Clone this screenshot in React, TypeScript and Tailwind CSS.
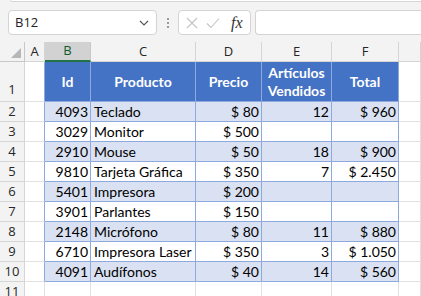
import React from "react";

type Row = [string, string, string, string, string];

const data: Row[] = [
  ["4093", "Teclado", "$ 80", "12", "$ 960"],
  ["3029", "Monitor", "$ 500", "", ""],
  ["2910", "Mouse", "$ 50", "18", "$ 900"],
  ["9810", "Tarjeta Gráfica", "$ 350", "7", "$ 2.450"],
  ["5401", "Impresora", "$ 200", "", ""],
  ["3901", "Parlantes", "$ 150", "", ""],
  ["2148", "Micrófono", "$ 80", "11", "$ 880"],
  ["6710", "Impresora Laser", "$ 350", "3", "$ 1.050"],
  ["4091", "Audífonos", "$ 40", "14", "$ 560"],
];

const cols = "grid-cols-[25px_20px_46px_105px_66px_70px_67px_1fr]";

function RowHead({ n, tall }: { n: string; tall?: boolean }) {
  return (
    <div
      className={`flex ${tall ? "items-end pb-[2px]" : "items-center"} justify-center bg-[#f3f3f3] border-r border-b border-[#d5d5d5] text-[13px] text-[#262626] font-['Open_Sans',sans-serif]`}
    >
      {n}
    </div>
  );
}

export default function App() {
  return (
    <div className="w-[421px] h-[296px] overflow-hidden bg-[#f3f3f3] font-['Lato',sans-serif] text-[14px] text-black">
      {/* top strip */}
      <div className="h-[2px] ml-[10px] bg-white border-b border-l border-[#d6d6d6] rounded-bl-[4px]" />
      {/* formula bar */}
      <div className="h-[40px] flex items-start pt-[8px] pl-[8px]">
        <div className="w-[149px] h-[25px] bg-white border border-[#d4d4d4] rounded-[4px] flex items-center pl-[6px] pr-[6px] font-['Open_Sans',sans-serif] text-[13px] text-[#222]">
          <span className="flex-1">B12</span>
          <svg width="10" height="6" viewBox="0 0 10 6" className="mr-[1px]">
            <path d="M1 1 L5 5 L9 1" fill="none" stroke="#555" strokeWidth="1.1" />
          </svg>
        </div>
        <div className="w-[21px] h-[25px] flex flex-col items-center justify-center gap-[2px]">
          <div className="w-[2px] h-[2px] bg-[#9a9a9a]" />
          <div className="w-[2px] h-[2px] bg-[#9a9a9a]" />
          <div className="w-[2px] h-[2px] bg-[#9a9a9a]" />
        </div>
        <div className="w-[73px] h-[25px] bg-white border border-[#d4d4d4] rounded-[4px] flex items-center pl-[7px]">
          <svg width="12" height="12" viewBox="0 0 12 12">
            <path d="M1 1 L11 11 M11 1 L1 11" stroke="#c4c4c4" strokeWidth="1.1" />
          </svg>
          <svg width="14" height="12" viewBox="0 0 14 12" className="ml-[8px]">
            <path d="M1 6.5 L5 10.5 L13 1.5" fill="none" stroke="#c4c4c4" strokeWidth="1.1" />
          </svg>
          <span className="ml-[11px] font-['Liberation_Serif',serif] italic text-[16px] text-[#333] leading-none">
            fx
          </span>
        </div>
        <div className="flex-1 ml-[4px] h-[25px] bg-white border border-r-0 border-[#d4d4d4] rounded-l-[4px]" />
      </div>
      {/* grid */}
      <div className={`grid ${cols} grid-rows-[20px_40px_repeat(11,20px)]`}>
        {/* column headers */}
        <div className="relative bg-[#f3f3f3] border-r border-b border-[#c8c8c8]">
          <svg width="10" height="10" viewBox="0 0 10 10" className="absolute right-[3px] bottom-[3px]">
            <path d="M10 0 L10 10 L0 10 Z" fill="#b7b7b7" />
          </svg>
        </div>
        {["A", "B", "C", "D", "E", "F", ""].map((c) => (
          <div
            key={c || "G"}
            className={`flex items-center justify-center font-['Open_Sans',sans-serif] text-[13px] ${
              c === "B"
                ? "bg-[#d2d2d2] text-[#0e5c2f] border-b-2 border-b-[#217346] border-r border-r-[#c8c8c8]"
                : "bg-[#f3f3f3] text-[#262626] border-r border-b border-[#d5d5d5]"
            }`}
          >
            {c}
          </div>
        ))}

        {/* row 1 header */}
        <RowHead n="1" tall />
        <div className="bg-white border-r border-r-[#8ea9db] border-b border-b-[#e1e1e1]" />
        {["Id", "Producto", "Precio", "Artículos Vendidos", "Total"].map((h) => (
          <div
            key={h}
            className="bg-[#4472c4] border-r border-b border-[#8ea9db] flex items-center justify-center text-center text-white font-bold leading-[18px] px-[2px]"
          >
            {h === "Artículos Vendidos" ? (
              <span>
                Artículos
                <br />
                Vendidos
              </span>
            ) : (
              h
            )}
          </div>
        ))}
        <div className="bg-white border-r border-b border-[#e1e1e1]" />

        {data.map((r, i) => {
          const band = i % 2 === 0 ? "bg-[#d9e1f2]" : "bg-white";
          return (
            <React.Fragment key={i}>
              <RowHead n={String(i + 2)} />
              <div className="bg-white border-r border-r-[#8ea9db] border-b border-b-[#e1e1e1]" />
              {r.map((v, j) => (
                <div
                  key={j}
                  className={`${band} border-r border-b border-[#8ea9db] flex items-center whitespace-nowrap overflow-visible ${
                    j === 1 ? "justify-start pl-[3px]" : "justify-end pr-[2px]"
                  }`}
                >
                  {v}
                </div>
              ))}
              <div className="bg-white border-r border-b border-[#e1e1e1]" />
            </React.Fragment>
          );
        })}

        {/* row 11 */}
        <RowHead n="11" />
        {Array.from({ length: 7 }).map((_, k) => (
          <div key={k} className="bg-white border-r border-b border-[#e1e1e1]" />
        ))}
        {/* row 12 */}
        <RowHead n="12" />
        {Array.from({ length: 7 }).map((_, k) => (
          <div key={k} className="bg-white border-r border-b border-[#e1e1e1]" />
        ))}
      </div>
    </div>
  );
}
